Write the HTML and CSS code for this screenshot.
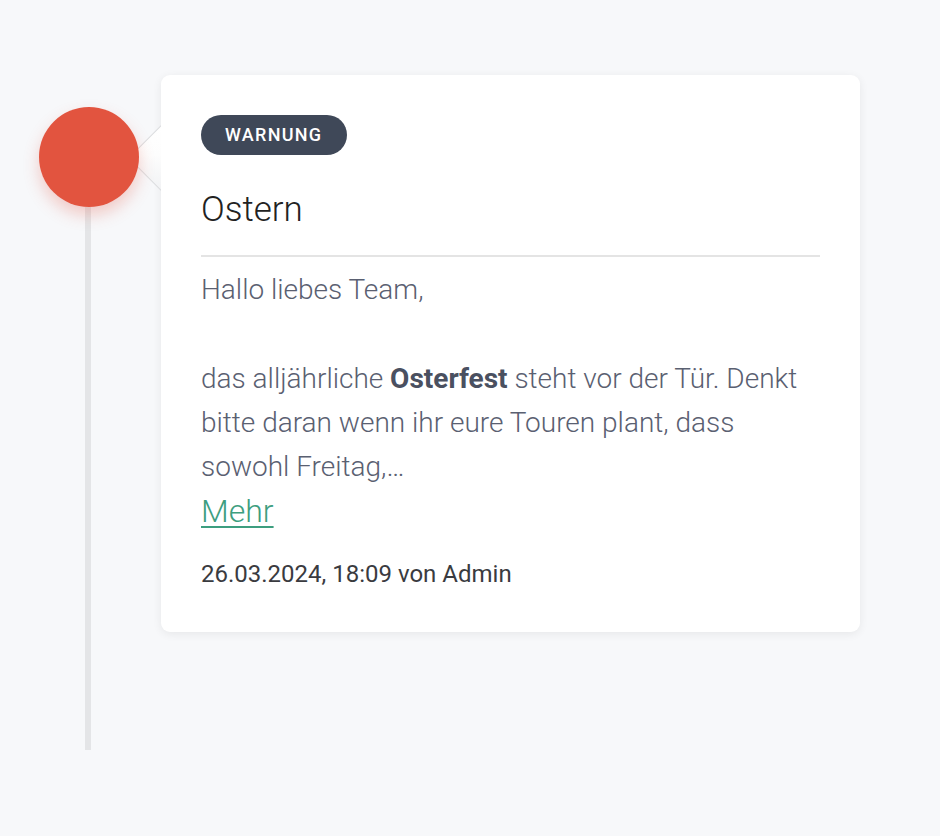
FILE: index.html
```html
<!DOCTYPE html>
<html lang="de">
<head>
<meta charset="utf-8">
<title>Timeline</title>
<link rel="stylesheet" href="styles.css">
</head>
<body>
<div class="timeline">
  <div class="rail">
    <div class="dot"></div>
    <div class="line"></div>
  </div>
  <article class="card">
    <span class="badge">WARNUNG</span>
    <h2 class="title">Ostern</h2>
    <div class="body">
      <p>Hallo liebes Team,</p>
      <p>&nbsp;</p>
      <p>das alljährliche <strong>Osterfest</strong> steht vor der Tür. Denkt bitte daran wenn ihr eure Touren plant, dass sowohl Freitag,…</p>
    </div>
    <a class="more" href="#">Mehr</a>
    <div class="meta">26.03.2024, 18:09 von Admin</div>
  </article>
</div>
</body>
</html>
```
FILE: styles.css
```css
html, body {
  margin: 0;
  padding: 0;
  background: #f7f8fa;
  font-family: Roboto, "Liberation Sans", sans-serif;
}
.timeline {
  display: flex;
  align-items: flex-start;
  padding: 75px 0 0 39px;
}
.rail {
  width: 100px;
  margin-top: 32px;
  display: flex;
  flex-direction: column;
  align-items: center;
  position: relative;
  z-index: 2;
}
.dot {
  width: 100px;
  height: 100px;
  border-radius: 50%;
  background: #e2543f;
  box-shadow: 0 8px 16px rgba(226, 84, 63, 0.28);
  position: relative;
  z-index: 2;
}
.line {
  width: 6px;
  height: 543px;
  background: #e4e5e7;
  margin-left: -2px;
}
.card {
  position: relative;
  z-index: 1;
  margin-left: 22px;
  width: 619px;
  padding: 40px 40px 43px;
  background: #fff;
  border-radius: 9px;
  box-shadow: 0 2px 10px rgba(0, 0, 0, 0.07);
}
.card::before {
  content: "";
  position: absolute;
  left: -23px;
  top: 59px;
  width: 46px;
  height: 46px;
  background: linear-gradient(135deg, #fff 0%, #fdfdfd 45%, #f1f2f4 100%);
  border: 1px solid #dcdde0;
  transform: rotate(45deg);
  z-index: -1;
}
.card::after {
  content: "";
  position: absolute;
  left: 0;
  top: 45px;
  width: 38px;
  height: 74px;
  background: #fff;
}
.badge {
  display: inline-block;
  position: relative;
  z-index: 1;
  height: 40px;
  line-height: 40px;
  padding: 0 25px 0 24px;
  border-radius: 20px;
  background: #3f4858;
  color: #fff;
  font-size: 18px;
  font-weight: 500;
  letter-spacing: 1.3px;
}
.title {
  margin: 32px 0 0;
  font-size: 35px;
  font-weight: 300;
  color: #222;
  line-height: 46px;
  padding-bottom: 22px;
  border-bottom: 2px solid #e4e4e4;
  position: relative;
  z-index: 1;
}
.body {
  margin-top: 11px;
  color: #5a6071;
  font-size: 28px;
  font-weight: 300;
  line-height: 44.3px;
  position: relative;
  z-index: 1;
}
.body p {
  margin: 0;
}
.body strong {
  font-weight: 700;
  color: #4a5060;
}
.more {
  display: inline-block;
  color: #3d9e7f;
  font-size: 32px;
  font-weight: 300;
  line-height: 44px;
  text-decoration: underline;
  text-decoration-thickness: 2px;
  text-underline-offset: 4px;
}
.meta {
  margin-top: 26px;
  font-size: 24px;
  font-weight: 400;
  color: #3a3b3f;
  line-height: 30px;
}
```
